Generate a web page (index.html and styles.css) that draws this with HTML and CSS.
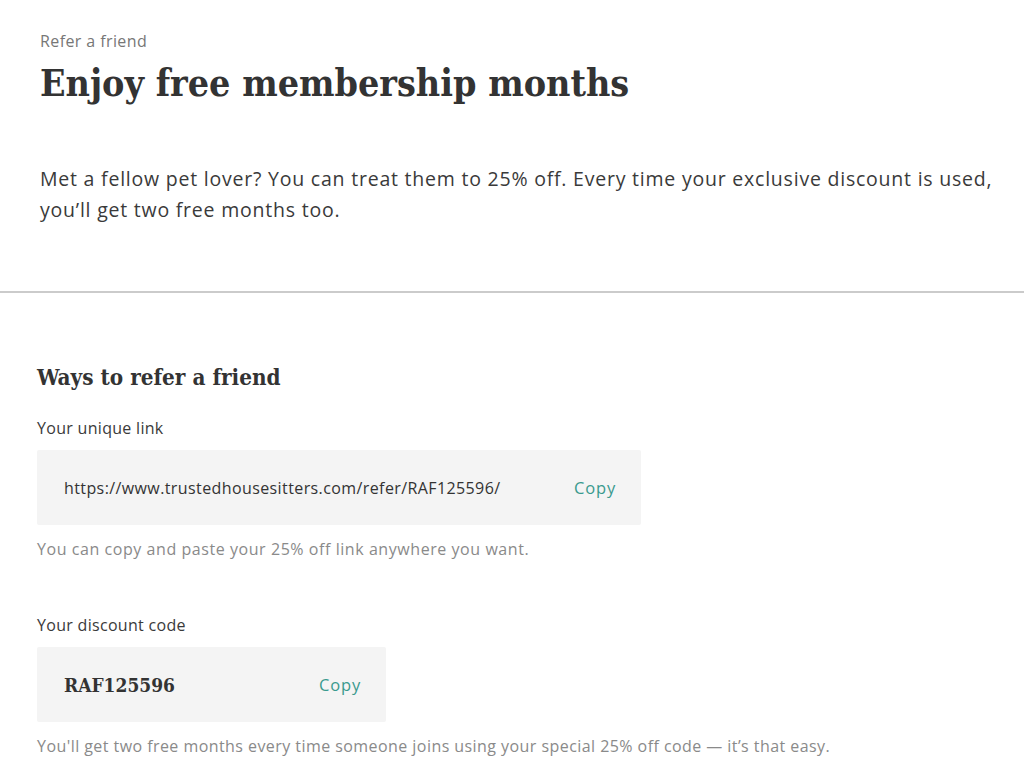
FILE: index.html
```html
<!DOCTYPE html>
<html lang="en">
<head>
<meta charset="utf-8">
<title>Refer a friend</title>
<link rel="stylesheet" href="styles.css">
</head>
<body>
<header class="intro">
  <p class="eyebrow">Refer a friend</p>
  <h1 class="title">Enjoy free membership months</h1>
  <p class="lead">Met a fellow pet lover? You can treat them to 25% off. Every time your exclusive discount is used, you’ll get two free months too.</p>
</header>
<hr class="divider">
<section class="ways">
  <h2 class="ways-title">Ways to refer a friend</h2>
  <div class="field">
    <p class="field-label">Your unique link</p>
    <div class="copy-box copy-box--link">
      <span class="link-text">https://www.trustedhousesitters.com/refer/RAF125596/</span>
      <span class="copy">Copy</span>
    </div>
    <p class="hint hint--link">You can copy and paste your 25% off link anywhere you want.</p>
  </div>
  <div class="field">
    <p class="field-label field-label--code">Your discount code</p>
    <div class="copy-box copy-box--code">
      <span class="code-text">RAF125596</span>
      <span class="copy">Copy</span>
    </div>
    <p class="hint">You'll get two free months every time someone joins using your special 25% off code — it’s that easy.</p>
  </div>
</section>
</body>
</html>
```
FILE: styles.css
```css
* { box-sizing: border-box; }
html, body { margin: 0; padding: 0; background: #fff; }
body {
  font-family: "Open Sans", "Noto Sans", sans-serif;
  color: #3a3a3a;
}
p { margin: 0; }

.intro { padding: 31px 16px 0 40px; }
.eyebrow {
  font-size: 16px;
  line-height: 20px;
  letter-spacing: 0.4px;
  color: #777;
}
.title {
  margin: 9px 0 0;
  font-family: "DejaVu Serif", serif;
  font-stretch: condensed;
  font-weight: bold;
  font-size: 37.3px;
  line-height: 46px;
  color: #333;
}
.lead {
  margin-top: 57px;
  font-size: 19.5px;
  line-height: 31px;
  letter-spacing: 0.78px;
  color: #3a3a3a;
}
.divider {
  margin: 66px 0 0;
  border: 0;
  height: 2px;
  background: #cbcbcb;
}

.ways { padding: 69px 37px 0; }
.ways-title {
  margin: 0;
  font-family: "DejaVu Serif", serif;
  font-stretch: condensed;
  font-weight: bold;
  font-size: 22.3px;
  line-height: 30px;
  color: #333;
}
.field-label {
  margin-top: 26px;
  font-size: 16px;
  line-height: 20px;
  letter-spacing: 0.3px;
  color: #3a3a3a;
}
.field-label--code { margin-top: 56px; }
.copy-box {
  margin-top: 12px;
  height: 75px;
  background: #f4f4f4;
  border-radius: 2px;
  display: flex;
  align-items: center;
  justify-content: space-between;
  padding: 0 25px 0 27px;
}
.copy-box--link { width: 604px; }
.copy-box--code { width: 349px; }
.link-text {
  font-size: 16px;
  letter-spacing: 0.4px;
  color: #333;
}
.code-text {
  font-family: "DejaVu Serif", serif;
  font-stretch: condensed;
  font-weight: bold;
  font-size: 19px;
  color: #333;
}
.copy {
  font-size: 16.5px;
  letter-spacing: 0.8px;
  color: #3a9a8e;
}
.hint {
  margin-top: 14px;
  font-size: 16px;
  line-height: 20px;
  letter-spacing: 0.44px;
  color: #8a8a8a;
}
.hint--link { letter-spacing: 0.56px; }
```
